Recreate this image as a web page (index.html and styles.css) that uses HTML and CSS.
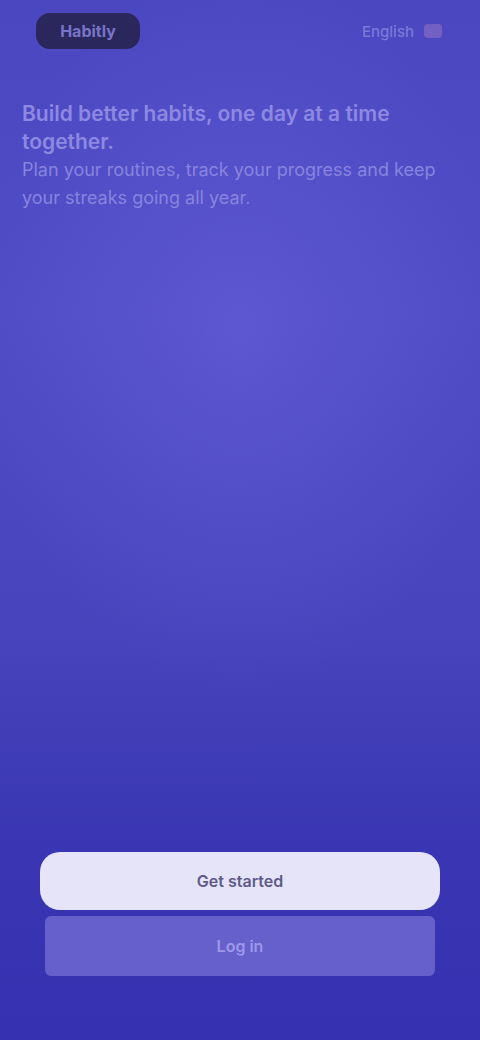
FILE: index.html
```html
<!DOCTYPE html>
<html lang="en">
<head>
<meta charset="utf-8">
<title>Welcome</title>
<link rel="stylesheet" href="styles.css">
</head>
<body>
<div class="screen">
  <header class="topbar">
    <div class="logo">Habitly</div>
    <a class="lang">English <span class="flag"></span></a>
  </header>
  <section class="intro">
    <h1 class="title">Build better habits, one day at a time together.</h1>
    <p class="lead">Plan your routines, track your progress and keep your streaks going all year.</p>
  </section>
  <div class="spacer"></div>
  <footer class="actions">
    <button class="btn btn-primary">Get started</button>
    <button class="btn btn-secondary">Log in</button>
  </footer>
</div>
</body>
</html>
```
FILE: styles.css
```css
* { box-sizing: border-box; }
html, body { margin: 0; padding: 0; height: 100%; }
body {
  font-family: Inter, "Noto Sans", "Liberation Sans", sans-serif;
  background: #3d3ab6;
}
.screen {
  width: 480px;
  height: 1040px;
  display: flex;
  flex-direction: column;
  background:
    radial-gradient(ellipse 260px 360px at 240px 330px, rgba(120,110,230,0.35), rgba(120,110,230,0) 100%),
    linear-gradient(180deg, #4a47c0 0%, #4f4cc6 30%, #4744bc 60%, #3834b2 85%, #3531b0 100%);
}
.topbar {
  display: flex;
  align-items: center;
  justify-content: space-between;
  padding: 12px 38px 0 36px;
  height: 50px;
}
.logo {
  background: #29275c;
  color: #7874c8;
  font-weight: 700;
  font-size: 16px;
  border-radius: 14px;
  padding: 8px 22px;
  width: 104px;
  text-align: center;
}
.lang {
  color: #7c79d8;
  font-size: 15px;
  font-weight: 500;
  display: flex;
  align-items: center;
  gap: 10px;
}
.flag {
  width: 18px;
  height: 14px;
  border-radius: 4px;
  background: #7460c2;
}
.intro {
  padding: 50px 22px 0 22px;
}
.title {
  margin: 0;
  font-size: 21px;
  line-height: 28px;
  font-weight: 600;
  color: #8d89e2;
  width: 380px;
}
.lead {
  margin: 0;
  font-size: 18px;
  line-height: 28px;
  color: #8884de;
  width: 430px;
}
.spacer { flex: 1; }
.actions {
  display: flex;
  flex-direction: column;
  gap: 6px;
  padding: 0 40px 64px 40px;
}
.btn {
  font-family: inherit;
  border: none;
  border-radius: 20px;
  font-size: 16px;
  font-weight: 600;
  height: 58px;
}
.btn-primary {
  background: #e6e4f8;
  color: #5d5a8a;
}
.btn-secondary {
  background: rgba(160,150,235,0.45);
  color: #9d98ea;
  margin: 0 5px;
  border-radius: 6px;
  height: 60px;
}
```
